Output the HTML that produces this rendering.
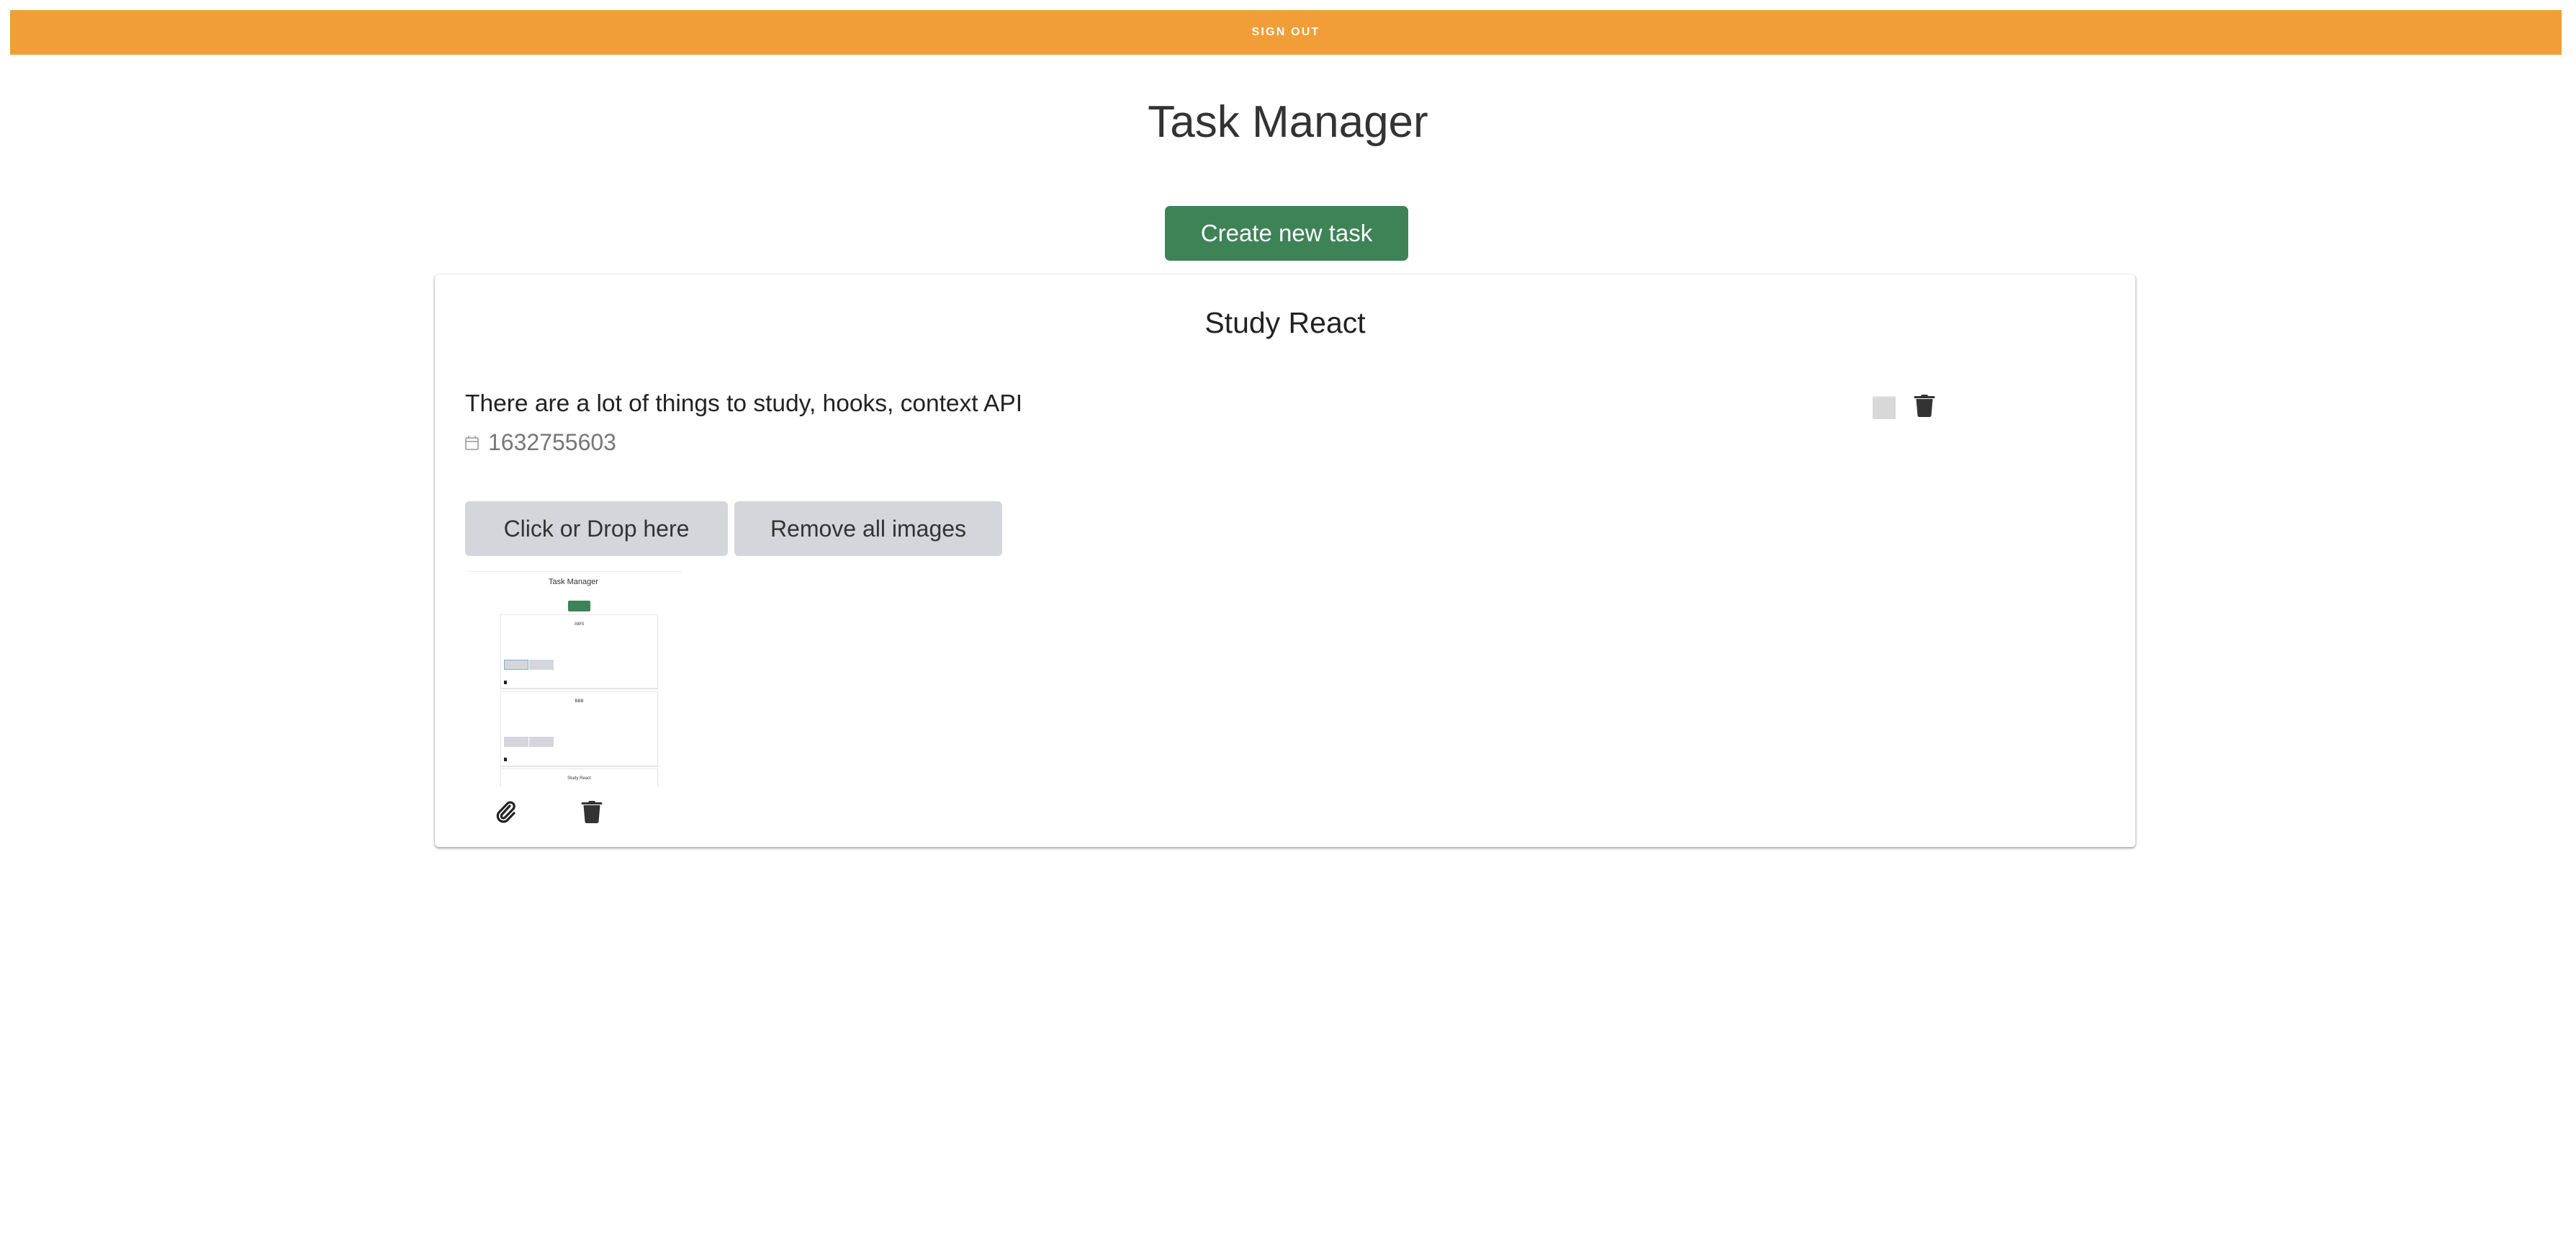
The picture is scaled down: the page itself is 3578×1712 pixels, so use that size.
<!DOCTYPE html>
<html><head><meta charset="utf-8"><style>
*{margin:0;padding:0;box-sizing:border-box}
body{width:3578px;height:1712px;background:#fff;font-family:"Liberation Sans",sans-serif;color:#333;position:relative;overflow:hidden}
.a{position:absolute}
.bar{left:14px;top:14px;width:3544px;height:62px;background:#f19e38;color:#fff;font-weight:bold;font-size:16px;letter-spacing:2.2px;text-align:center;line-height:62px}
.title{left:0;width:3578px;top:130px;text-align:center;font-size:62px;line-height:80px;color:#333}
.create{left:1618px;top:286px;width:338px;height:76px;background:#3d8356;border-radius:7px;color:#fff;font-size:33px;text-align:center;line-height:76px}
.card{left:604px;top:381px;width:2362px;height:795px;border-radius:6px;box-shadow:0 1px 2px 1px rgba(0,0,0,.22),0 3px 4px rgba(0,0,0,.12)}
.h2{left:0;width:100%;top:42px;text-align:center;font-size:41px;line-height:50px;color:#222}
.btn{background:#d4d6dc;border-radius:6px;font-size:32px;text-align:center;line-height:76px;color:#333;height:76px;top:315px}
.m{position:absolute;background:#fff;border:1px solid #e6e6e6;box-shadow:0 1px 1px rgba(0,0,0,.12)}
</style></head><body>
<div class="a bar">SIGN OUT</div>
<div class="a title">Task Manager</div>
<div class="a create">Create new task</div>
<div class="a card">
  <div class="a h2">Study React</div>
  <div class="a" style="left:42px;top:159px;font-size:33.5px;line-height:42px;color:#222">There are a lot of things to study, hooks, context API</div>
  <div class="a" style="left:42px;top:213px;font-size:32px;line-height:40px;color:#777">
    <svg width="20" height="22" viewBox="0 0 20 22" style="vertical-align:-1px;margin-right:12px"><rect x="1" y="4" width="17" height="16" rx="1.5" fill="none" stroke="#999" stroke-width="1.6"/><line x1="1" y1="9" x2="18" y2="9" stroke="#999" stroke-width="1.4"/><line x1="5" y1="1" x2="5" y2="5" stroke="#999" stroke-width="1.4"/><line x1="14" y1="1" x2="14" y2="5" stroke="#999" stroke-width="1.4"/></svg>1632755603</div>
  <div class="a btn" style="left:42px;width:365px">Click or Drop here</div>
  <div class="a btn" style="left:416px;width:372px">Remove all images</div>
  <div class="a" style="left:1997px;top:169px;width:32px;height:32px;background:#d8d8d8;border-radius:2px;border-top:2px solid #e4e4e4"></div>
  <svg class="a" style="left:2054px;top:165px" width="30" height="34" viewBox="0 0 30 34"><path d="M11 2h8l1 2h8a1 1 0 0 1 0 3H2a1 1 0 0 1 0-3h8z" fill="#333"/><path d="M3.5 8h23l-2 23a2.5 2.5 0 0 1-2.5 2H8a2.5 2.5 0 0 1-2.5-2z" fill="#333"/></svg>
  <div class="a" style="left:42px;top:412px;width:301px;height:299px;overflow:hidden;background:#fff;border-top:1px solid #eee">
    <div class="a" style="left:0;width:301px;top:8px;text-align:center;font-size:11px;color:#333">Task Manager</div>
    <div class="a" style="left:143px;top:40px;width:31px;height:15px;background:#3d8356;border-radius:2px"></div>
    <div class="m" style="left:49px;top:59px;width:219px;height:103px"><div style="text-align:center;font-size:6px;margin-top:10px">AWS</div>
      <div class="a" style="left:4px;top:62px;width:34px;height:14px;background:#d4d6dc;border:1px solid #8aa8e0"></div><div class="a" style="left:39px;top:62px;width:34px;height:14px;background:#d4d6dc"></div><div class="a" style="left:4px;top:91px;width:4px;height:5px;background:#222"></div></div>
    <div class="m" style="left:49px;top:166px;width:219px;height:104px"><div style="text-align:center;font-size:6px;margin-top:10px">BBB</div>
      <div class="a" style="left:4px;top:62px;width:34px;height:14px;background:#d4d6dc"></div><div class="a" style="left:39px;top:62px;width:34px;height:14px;background:#d4d6dc"></div><div class="a" style="left:4px;top:91px;width:4px;height:5px;background:#222"></div></div>
    <div class="m" style="left:49px;top:273px;width:219px;height:60px"><div style="text-align:center;font-size:6px;margin-top:10px">Study React</div></div>
  </div>
  <svg class="a" style="left:84px;top:729px" width="30" height="33" viewBox="0 0 30 33"><path d="M20 9 L9 21 a3 3 0 0 0 4.5 4 L25 13 a5.5 5.5 0 0 0-8-7.5 L5 18 a8 8 0 0 0 11.5 11 L26 19" fill="none" stroke="#222" stroke-width="3.2" stroke-linecap="round"/></svg>
  <svg class="a" style="left:203px;top:729px" width="30" height="34" viewBox="0 0 30 34"><path d="M11 2h8l1 2h8a1 1 0 0 1 0 3H2a1 1 0 0 1 0-3h8z" fill="#333"/><path d="M3.5 8h23l-2 23a2.5 2.5 0 0 1-2.5 2H8a2.5 2.5 0 0 1-2.5-2z" fill="#333"/></svg>
</div>
</body></html>
